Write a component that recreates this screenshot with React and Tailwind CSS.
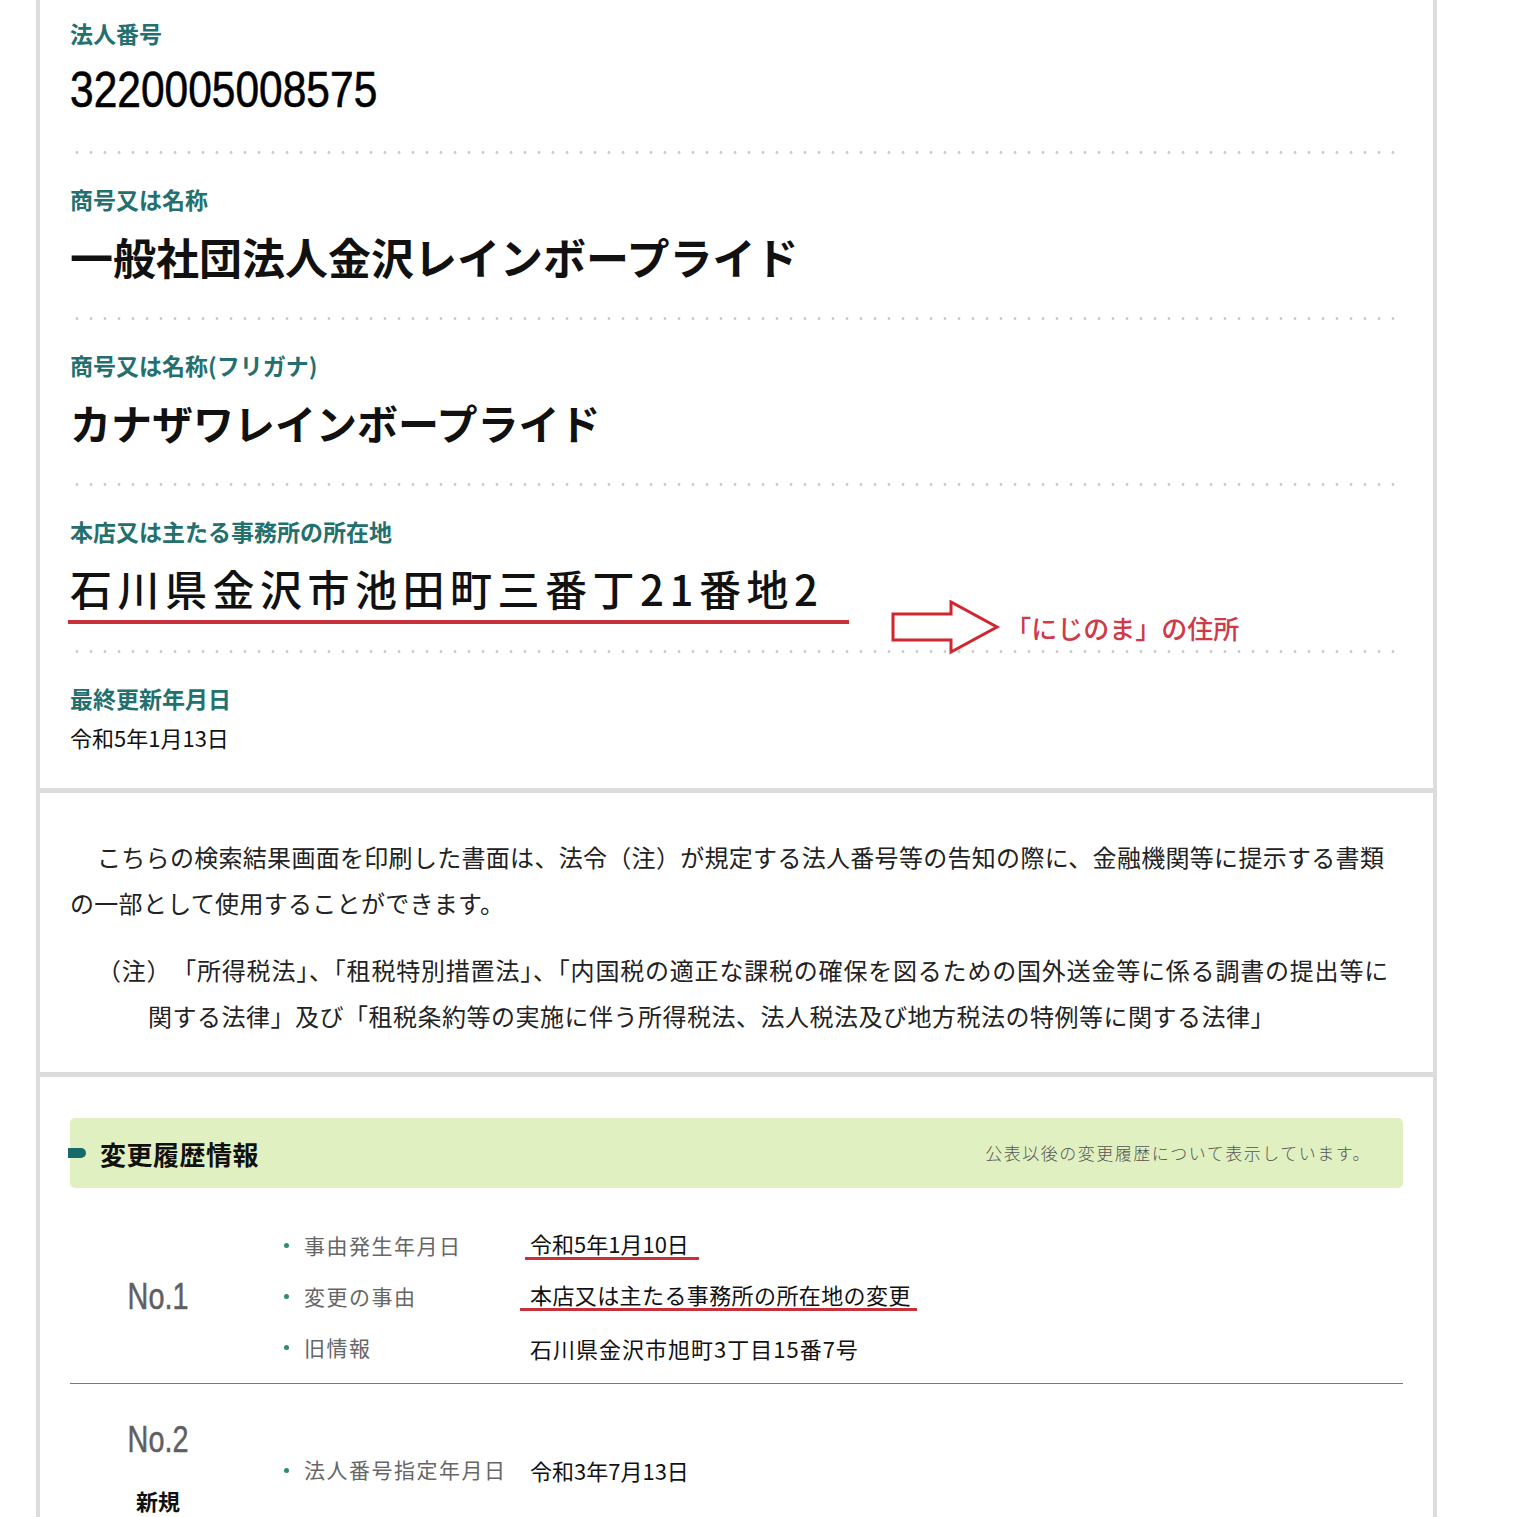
import React from "react";

function Dots() {
  return (
    <div className="h-[3px] w-full bg-[radial-gradient(circle,#cfcfcf_1.3px,transparent_1.7px)] bg-size-[14px_3px] bg-repeat-x" />
  );
}

function Label({ children }) {
  return (
    <div className="h-[30px] text-[23px] leading-[30px] font-bold text-[#23706e] whitespace-nowrap">
      {children}
    </div>
  );
}

function HistRow({ label, children }) {
  return (
    <li className="flex h-[51px] items-center">
      <span className="ml-[38px] h-[5px] w-[5px] rounded-full bg-[#2e8b6f]" />
      <span className="ml-[15px] w-[226px] text-[21px] tracking-[1.5px] text-[#666] whitespace-nowrap">
        {label}
      </span>
      {children}
    </li>
  );
}

export default function App() {
  return (
    <div className="min-h-[1517px] bg-white font-['Noto_Sans_CJK_JP','Noto_Sans',sans-serif] text-[#1a1a1a]">
      <div className="ml-[36px] w-[1401px] min-h-[1517px] border-x-4 border-[#dcdcdc]">
        {/* Section 1 */}
        <section className="px-[30px] pt-[18px] pb-[36px]">
          <div>
            <Label>法人番号</Label>
            <div className="mt-[14px] h-[56px]">
              <span className="inline-block origin-left scale-x-[0.85] text-[50px] leading-[56px] font-['Liberation_Sans',sans-serif] text-black [-webkit-text-stroke:0.6px_black]">
                3220005008575
              </span>
            </div>
            <div className="pt-[33px]">
              <Dots />
            </div>
          </div>
          <div className="pt-[30px]">
            <Label>商号又は名称</Label>
            <div className="mt-[14px] h-[56px] leading-[56px] text-[43px] font-bold text-[#111] whitespace-nowrap">
              一般社団法人金沢レインボープライド
            </div>
            <div className="pt-[33px]">
              <Dots />
            </div>
          </div>
          <div className="pt-[30px]">
            <Label>商号又は名称(フリガナ)</Label>
            <div className="mt-[14px] h-[56px] leading-[56px] text-[41px] font-bold text-[#111] whitespace-nowrap">
              カナザワレインボープライド
            </div>
            <div className="pt-[33px]">
              <Dots />
            </div>
          </div>
          <div className="pt-[30px]">
            <Label>本店又は主たる事務所の所在地</Label>
            <div className="mt-[14px] flex h-[64px] items-start">
              <span className="-ml-[2px] h-[64px] border-b-4 border-[#c8303a] pl-[2px] pr-[26px] text-[42px] leading-[56px] font-medium tracking-[5.5px] text-[#111] whitespace-nowrap">
                石川県金沢市池田町三番丁21番地2
              </span>
              <div className="ml-[42px] mt-[40px] flex items-center gap-[4px]">
                <svg width="110" height="56" viewBox="0 0 110 56" className="block">
                  <polygon
                    points="2,14 60,14 60,2 106,27 60,52 60,40 2,40"
                    fill="white"
                    stroke="#d0262f"
                    strokeWidth="3"
                    strokeLinejoin="miter"
                  />
                </svg>
                <span className="text-[26px] leading-[36px] font-medium text-[#d03a48] whitespace-nowrap">
                  「にじのま」の住所
                </span>
              </div>
            </div>
            <div className="pt-[26px]">
              <Dots />
            </div>
          </div>
          <div className="pt-[30px]">
            <Label>最終更新年月日</Label>
            <div className="mt-[9px] h-[30px] text-[22px] leading-[30px] text-[#111]">令和5年1月13日</div>
          </div>
        </section>

        {/* Section 2 */}
        <section className="border-t-[5px] border-[#dcdcdc] px-[30px] pt-[41px] pb-[33px] text-[24px] leading-[46px] text-[#222]">
          <p className="indent-[27px] tracking-[0.3px] whitespace-nowrap">
            こちらの検索結果画面を印刷した書面は、法令（注）が規定する法人番号等の告知の際に、金融機関等に提示する書類
          </p>
          <p className="tracking-[0.3px] whitespace-nowrap">の一部として使用することができます。</p>
          <div className="mt-[21px] pl-[27px] tracking-[0.8px]">
            <p className="whitespace-nowrap">
              （注）　「所得税法」、「租税特別措置法」、「内国税の適正な課税の確保を図るための国外送金等に係る調書の提出等に
            </p>
            <p className="pl-[51px] tracking-[0.5px] whitespace-nowrap">
              関する法律」及び「租税条約等の実施に伴う所得税法、法人税法及び地方税法の特例等に関する法律」
            </p>
          </div>
        </section>

        {/* Section 3 */}
        <section className="border-t-[5px] border-[#dcdcdc] px-[30px] pt-[41px] pb-[40px]">
          <div className="flex h-[70px] items-center rounded-[5px] bg-[#e0f0c0]">
            <span className="-ml-[2px] h-[10px] w-[18px] rounded-r-full bg-[#176a6a]" />
            <span className="ml-[14px] text-[26px] font-bold tracking-[0.5px] text-[#111]">変更履歴情報</span>
            <span className="ml-auto pr-[32px] text-[17px] font-light tracking-[1.5px] text-[#555] whitespace-nowrap">
              公表以後の変更履歴について表示しています。
            </span>
          </div>

          <div className="flex border-b border-[#4b8c8a] pt-[32px] pb-[10px]">
            <div className="flex w-[176px] items-center justify-center">
              <span className="inline-block scale-x-[0.8] text-[36px] text-[#5f5f5f] font-['Liberation_Sans',sans-serif] [-webkit-text-stroke:0.5px_#5f5f5f]">
                No.1
              </span>
            </div>
            <ul>
              <HistRow label="事由発生年月日">
                <span className="-ml-[5px] border-b-[3px] border-[#c8303a] pb-[2px] pl-[5px] pr-[10px] text-[22px] leading-[24px] text-[#111] whitespace-nowrap">
                  令和5年1月10日
                </span>
              </HistRow>
              <HistRow label="変更の事由">
                <span className="-ml-[10px] border-b-[3px] border-[#c8303a] pb-[2px] pl-[10px] pr-[6px] text-[22px] leading-[24px] tracking-[0.4px] text-[#111] whitespace-nowrap">
                  本店又は主たる事務所の所在地の変更
                </span>
              </HistRow>
              <HistRow label="旧情報">
                <span className="text-[22px] leading-[24px] tracking-[1px] text-[#111] whitespace-nowrap">
                  石川県金沢市旭町3丁目15番7号
                </span>
              </HistRow>
            </ul>
          </div>

          <div className="flex pt-[36px]">
            <div className="flex w-[176px] flex-col items-center">
              <span className="inline-block h-[40px] scale-x-[0.8] text-[36px] leading-[40px] text-[#5f5f5f] font-['Liberation_Sans',sans-serif] [-webkit-text-stroke:0.5px_#5f5f5f]">
                No.2
              </span>
              <span className="mt-[20px] h-[40px] text-[22px] leading-[40px] font-bold text-[#111]">新規</span>
            </div>
            <ul className="flex items-center">
              <HistRow label="法人番号指定年月日">
                <span className="text-[22px] leading-[24px] text-[#111] whitespace-nowrap">令和3年7月13日</span>
              </HistRow>
            </ul>
          </div>
        </section>
      </div>
    </div>
  );
}
